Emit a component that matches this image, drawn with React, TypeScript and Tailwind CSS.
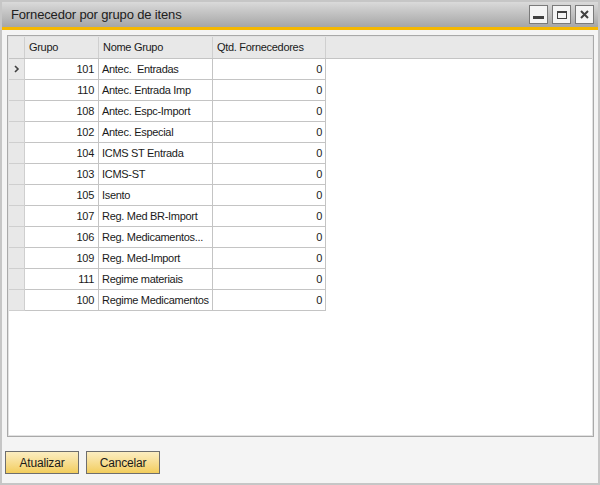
import React from "react";

const rows = [
	{ grupo: 101, nome: "Antec.  Entradas", qtd: 0 },
	{ grupo: 110, nome: "Antec. Entrada Imp", qtd: 0 },
	{ grupo: 108, nome: "Antec. Espc-Import", qtd: 0 },
	{ grupo: 102, nome: "Antec. Especial", qtd: 0 },
	{ grupo: 104, nome: "ICMS ST Entrada", qtd: 0 },
	{ grupo: 103, nome: "ICMS-ST", qtd: 0 },
	{ grupo: 105, nome: "Isento", qtd: 0 },
	{ grupo: 107, nome: "Reg. Med BR-Import", qtd: 0 },
	{ grupo: 106, nome: "Reg. Medicamentos...", qtd: 0 },
	{ grupo: 109, nome: "Reg. Med-Import", qtd: 0 },
	{ grupo: 111, nome: "Regime materiais", qtd: 0 },
	{ grupo: 100, nome: "Regime Medicamentos", qtd: 0 },
];

function WinButton({ children }: { children: React.ReactNode }) {
	return (
		<div className="w-[19px] h-[19px] bg-[#f4f4f4] border border-[#7a7a7a] flex items-center justify-center">
			{children}
		</div>
	);
}

export default function App() {
	return (
		<div className="w-[600px] h-[485px] bg-[#f4f4f4] border-2 border-[#c6c6c6] flex flex-col font-['Liberation_Sans',Arial,sans-serif] text-[11px] tracking-[-0.3px] text-[#1a1a1a] overflow-hidden">
			{/* title bar */}
			<div className="h-[26px] flex items-center justify-between pl-[9px] pr-[4px] bg-gradient-to-b from-[#dadada] to-[#a6a6a6]">
				<span className="text-[13px] tracking-[-0.15px] text-[#202020]">Fornecedor por grupo de itens</span>
				<div className="flex gap-[4px]">
					<WinButton>
						<div className="w-[11px] h-[3px] bg-[#404040] mt-[5px]" />
					</WinButton>
					<WinButton>
						<div className="w-[10px] h-[8px] border border-[#404040] border-t-2" />
					</WinButton>
					<WinButton>
						<svg width="9" height="9" viewBox="0 0 9 9">
							<path d="M1 1 L8 8 M8 1 L1 8" stroke="#404040" strokeWidth="2" />
						</svg>
					</WinButton>
				</div>
			</div>
			<div className="h-[3px] bg-[#f5b800]" />

			{/* content */}
			<div className="flex-1 flex flex-col px-[5px] pt-[5px] pb-[9px]">
				<div className="h-[402px] mr-[-1px] bg-white border border-[#a9a9a9] shadow-[inset_0_0_0_1px_#e2e2e2] p-px">
					<div className="flex h-[22px] bg-[#e8e8e8] border-b border-[#c4c4c4]">
						<div className="w-[16px] border-r border-[#cfcfcf]" />
						<div className="w-[74px] border-r border-[#cfcfcf] pl-[4px] flex items-center">Grupo</div>
						<div className="w-[114px] border-r border-[#cfcfcf] pl-[4px] flex items-center">Nome Grupo</div>
						<div className="w-[113px] border-r border-[#cfcfcf] pl-[4px] flex items-center">Qtd. Fornecedores</div>
						<div className="flex-1" />
					</div>
					{rows.map((r, i) => (
						<div key={r.grupo} className="flex h-[21px]">
							<div className="w-[16px] bg-[#e8e8e8] border-r border-b border-[#cfcfcf] flex items-center justify-center">
								{i === 0 && (
									<svg width="6" height="8" viewBox="0 0 6 8">
										<path d="M1 1 L4 4 L1 7" stroke="#404040" strokeWidth="1.6" fill="none" />
									</svg>
								)}
							</div>
							<div className="w-[74px] border-r border-b border-[#c4c4c4] pr-[4px] flex items-center justify-end">{r.grupo}</div>
							<div className="w-[114px] border-r border-b border-[#c4c4c4] pl-[3px] flex items-center whitespace-pre">{r.nome}</div>
							<div className="w-[113px] border-r border-b border-[#c4c4c4] pr-[3px] flex items-center justify-end">{r.qtd}</div>
						</div>
					))}
				</div>
				<div className="flex gap-[7px] mt-[14px] ml-[-2px]">
					<button className="w-[74px] h-[23px] border border-[#6e6e6e] bg-gradient-to-b from-[#fcedc0] to-[#f2cd5a] text-[12px] tracking-[-0.2px] text-[#1a1a1a]">Atualizar</button>
					<button className="w-[74px] h-[23px] border border-[#6e6e6e] bg-gradient-to-b from-[#fcedc0] to-[#f2cd5a] text-[12px] tracking-[-0.2px] text-[#1a1a1a]">Cancelar</button>
				</div>
			</div>
		</div>
	);
}
